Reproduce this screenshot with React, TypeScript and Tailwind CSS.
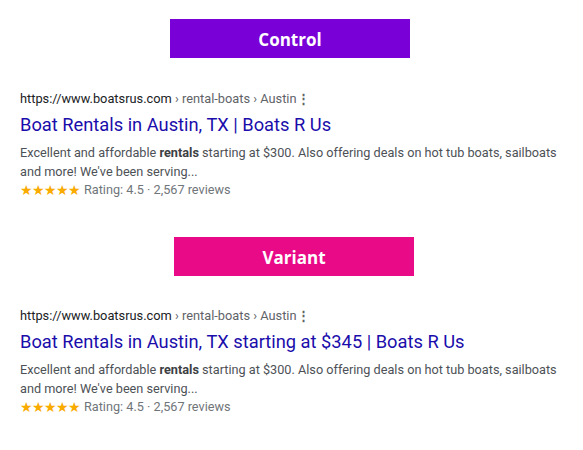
const roboto = { fontFamily: "Roboto, 'Liberation Sans', sans-serif" };

function Banner({ label, color, offset }: { label: string; color: string; offset: string }) {
  return (
    <div
      className={`${offset} ${color} flex h-[39px] w-[240px] items-center justify-center pt-[2px] text-[17px] font-bold text-white`}
      style={{ fontFamily: "'Open Sans', sans-serif" }}
    >
      {label}
    </div>
  );
}

function Result({ title }: { title: string }) {
  return (
    <div className="whitespace-nowrap pl-[20px]" style={roboto}>
      <div className="flex items-center text-[12.8px] leading-[20px] text-[#202124]">
        <span>https://www.boatsrus.com</span>
        <span className="text-[#5f6368]">&nbsp;› rental-boats › Austin</span>
        <span className="font-bold text-[#5f6368]">⋮</span>
      </div>
      <div className="mt-[4px] text-[18.3px] leading-[24px] text-[#1a0dab]">{title}</div>
      <div className="mt-[6px] text-[12.7px] leading-[19px] text-[#4d5156]">
        Excellent and affordable <b className="font-bold text-[#3c4043]">rentals</b> starting at $300. Also offering
        deals on hot tub boats, sailboats
        <br />
        and more! We've been serving...
      </div>
      <div className="flex items-center text-[12.7px] leading-[18px] text-[#70757a]">
        <span className="mr-[4px] text-[14px] tracking-[-1px] text-[#f9ab00]">★★★★★</span>
        <span>Rating: 4.5 · 2,567 reviews</span>
      </div>
    </div>
  );
}

export default function App() {
  return (
    <div className="h-[450px] w-[583px] bg-white pt-[19px]">
      <Banner label="Control" color="bg-[#7a00d8]" offset="ml-[170px]" />
      <div className="mt-[31px]">
        <Result title="Boat Rentals in Austin, TX | Boats R Us" />
      </div>
      <div className="mt-[38px]">
        <Banner label="Variant" color="bg-[#e80a87]" offset="ml-[174px]" />
      </div>
      <div className="mt-[30px]">
        <Result title="Boat Rentals in Austin, TX starting at $345 | Boats R Us" />
      </div>
    </div>
  );
}
